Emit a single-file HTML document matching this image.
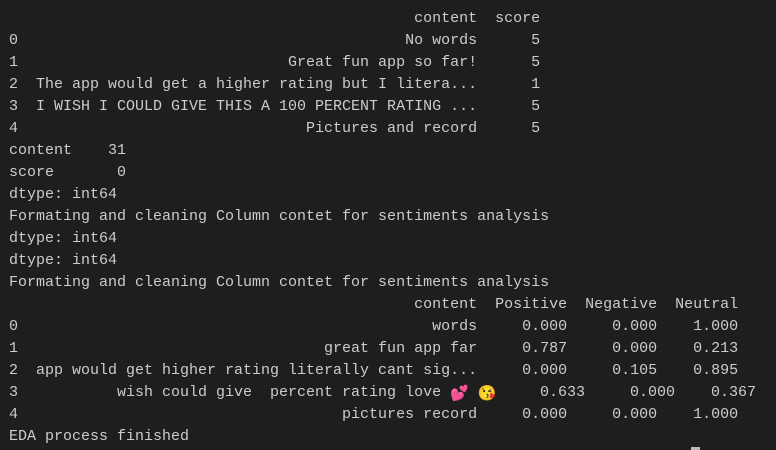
<!DOCTYPE html>
<html><head><meta charset="utf-8"><style>
html,body{margin:0;padding:0;background:#1e1e1e;width:776px;height:450px;overflow:hidden}
#t{position:absolute;left:9px;top:8px;font-family:"Liberation Mono",monospace;font-size:15px;line-height:22px;color:#cccccc;white-space:pre}
.l{height:22px;position:relative;overflow:visible}
.a{position:absolute;top:0}
.e{font-family:"Noto Color Emoji","DejaVu Sans",sans-serif;font-size:15px;line-height:15px;display:inline-block;vertical-align:-2px}
#cur{position:absolute;left:691px;top:447px;width:9px;height:3px;background:#bbbbbb}
</style></head><body>
<div id="t"><div class="l">                                             content  score</div><div class="l">0                                           No words      5</div><div class="l">1                              Great fun app so far!      5</div><div class="l">2  The app would get a higher rating but I litera...      1</div><div class="l">3  I WISH I COULD GIVE THIS A 100 PERCENT RATING ...      5</div><div class="l">4                                Pictures and record      5</div><div class="l">content    31</div><div class="l">score       0</div><div class="l">dtype: int64</div><div class="l">Formating and cleaning Column contet for sentiments analysis</div><div class="l">dtype: int64</div><div class="l">dtype: int64</div><div class="l">Formating and cleaning Column contet for sentiments analysis</div><div class="l">                                             content  Positive  Negative  Neutral</div><div class="l">0                                              words     0.000     0.000    1.000</div><div class="l">1                                  great fun app far     0.787     0.000    0.213</div><div class="l">2  app would get higher rating literally cant sig...     0.000     0.105    0.895</div><div class="l">3           wish could give  percent rating love <span class="e" style="color:#e8336b">💕</span> <span class="e">😘</span><span class="a" style="left:531px">0.633</span><span class="a" style="left:621px">0.000</span><span class="a" style="left:702px">0.367</span></div><div class="l">4                                    pictures record     0.000     0.000    1.000</div><div class="l">EDA process finished</div></div>
<div id="cur"></div>
</body></html>
